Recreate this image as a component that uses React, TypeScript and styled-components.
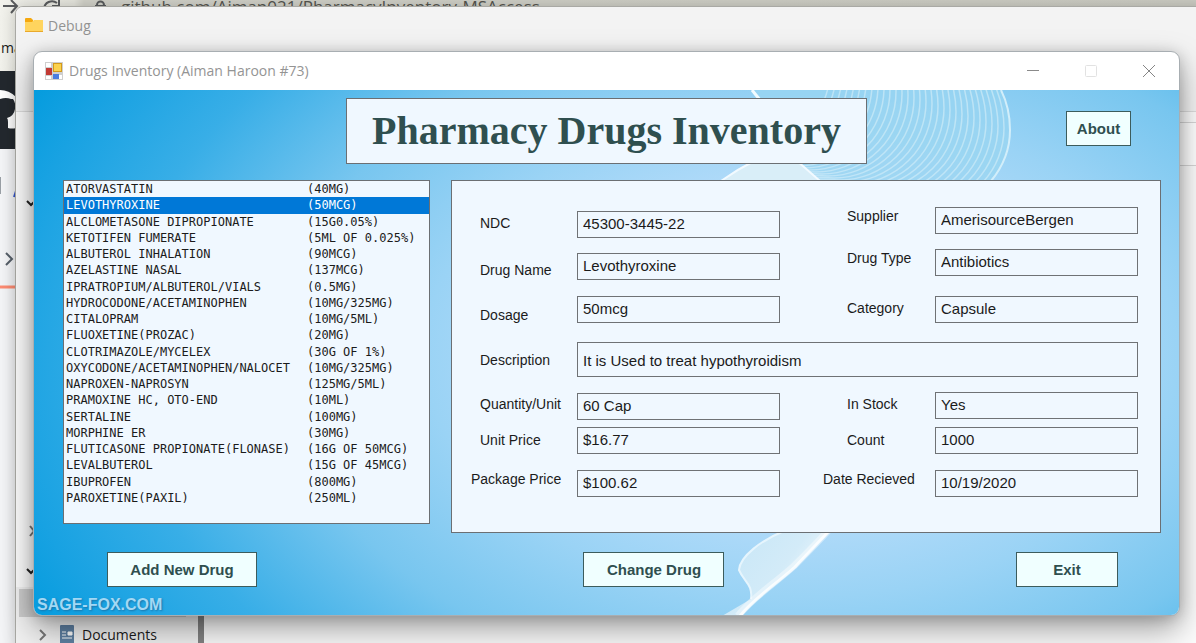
import React, { useState } from "react";
import styled, { createGlobalStyle } from "styled-components";

const sans = '"Liberation Sans", Arial, sans-serif';
const shell = '"Open Sans", "Segoe UI", sans-serif';
const edge = "#6b6f73";
const slate = "#2f4f4f";

const GlobalStyle = createGlobalStyle`
  *, *::before, *::after { box-sizing: border-box; }
  body { margin: 0; font-family: ${sans}; color: #1b1b1b; }
  button, input { font: inherit; color: inherit; }
`;

const Desktop = styled.div`
  position: relative;
  min-height: 100vh;
  overflow: hidden;
  background: #f4f5f7;
`;

/* Browser window at the back */
const BrowserBar = styled.div`
  height: 71px;
  background: linear-gradient(90deg, #f2f2ec 0, #e6e6de 74px, #d2d2c9 84px, #cdcdc4);
  display: flex;
  align-items: flex-start;
  gap: 12px;
`;

const BrowserIcons = styled.svg`
  flex: none;
  display: block;
`;

const Address = styled.span`
  font: 17px/14px ${shell};
  color: #55554f;
  white-space: nowrap;
`;

const BookmarkText = styled.span`
  position: absolute;
  left: 1px;
  top: 38px;
  font: 14px/20px ${shell};
  color: #1b1b1b;
`;

const RepoHeader = styled.div`
  height: 78px;
  background: #24292f;
`;

const RepoBody = styled.svg`
  display: block;
`;

/* Explorer window */
const Explorer = styled.section`
  position: absolute;
  inset: 6px -10px -10px 15px;
  border: 1px solid #a9a9a4;
  border-radius: 8px 0 0 0;
  background: #fcfcfc;
  overflow: hidden;
  box-shadow: 0 0 16px rgba(0, 0, 0, 0.2);
`;

const ExplorerBar = styled.header`
  height: 105px;
  padding: 8px 9px;
  background: #f3f3f3;
  border-bottom: 1px solid #dcdcdc;
  display: flex;
  align-items: flex-start;
  gap: 5px;
  font: 14px/21px ${shell};
  color: #929292;
`;

const AddressEdge = styled.div`
  height: 44px;
  margin: 10px 0 0 60px;
  border: 1px solid #d6d6d6;
  background: #ffffff;
`;

const NavPane = styled.nav`
  position: absolute;
  left: 0;
  top: 580px;
  width: 188px;
  padding: 2px 12px 0 3px;
  border-right: 6px solid #838383;
  background: #f1f1f1;
`;

const NavSelected = styled.div`
  height: 28px;
  background: #cccccc;
`;

const NavLink = styled.a`
  display: flex;
  align-items: center;
  gap: 8px;
  height: 36px;
  padding-left: 19px;
  font: 14px/20px ${shell};
  color: #1b1b1b;
  text-decoration: none;
`;

const NavText = styled.span`
  margin-left: -4px;
`;

const TreeMarks = styled.svg`
  position: absolute;
  left: 10px;
  top: 186px;
`;

/* Application window */
const AppWindow = styled.main`
  position: absolute;
  left: 33px;
  right: 16px;
  top: 51px;
  border: 1px solid #a8aeb2;
  border-radius: 9px;
  overflow: hidden;
  background: #ffffff;
  box-shadow: 0 14px 32px rgba(0, 0, 0, 0.36), 0 2px 14px rgba(0, 0, 0, 0.18);
`;

const TitleBar = styled.header`
  height: 38px;
  padding: 0 1px 0 11px;
  display: flex;
  align-items: center;
  gap: 6px;
  font: 14px/20px ${shell};
  color: #949494;
`;

const TitleText = styled.span`
  flex: 1;
`;

const Caption = styled.button`
  width: 58px;
  height: 38px;
  margin: 0;
  padding: 0;
  border: 0;
  background: none;
  display: grid;
  place-items: center;
`;

const CaptionGroup = styled.div`
  display: flex;
`;

const Form = styled.div`
  position: relative;
  padding: 8px 18px 28px 29px;
  background: radial-gradient(
    ellipse 70% 99% at 67% 50%,
    #bfe0fb 0%, #b5dcfa 30%, #9ad3f5 47%, #78c6ef 65%, #38aee7 85%, #18a2e2 100%, #059cde 108%
  );
`;

const Backdrop = styled.svg`
  position: absolute;
  inset: 0;
  width: 100%;
  height: 100%;
`;

const Watermark = styled.span`
  position: absolute;
  left: 3px;
  bottom: 1px;
  font: bold 16px/18px ${sans};
  color: #a3d8f4;
  text-shadow: 1px 1px 2px #1b75aa;
`;

const Header = styled.div`
  position: relative;
  display: grid;
  grid-template-columns: 1fr auto 1fr;
  align-items: start;
  padding-right: 19px;
`;

const Heading = styled.h1`
  grid-column: 2;
  margin: 0 0 0 8px;
  padding: 1px 25px;
  border: 1px solid ${edge};
  background: #f0f8ff;
  font: bold 40px/62px "Liberation Serif", "Times New Roman", serif;
  color: ${slate};
  white-space: nowrap;
`;

const FormButton = styled.button`
  height: 35px;
  padding: 0;
  border: 1px solid #3c5c5c;
  background: #f0ffff;
  font-weight: bold;
  font-size: 15px;
  color: ${slate};
`;

const AboutButton = styled(FormButton)`
  justify-self: end;
  width: 65px;
  margin: 13px 11px 0 0;
`;

const Content = styled.div`
  position: relative;
  display: flex;
  align-items: flex-start;
  gap: 21px;
  margin-top: 16px;
`;

const DrugList = styled.ul`
  flex: none;
  display: grid;
  grid-template-rows: repeat(20, 1fr);
  width: 367px;
  height: 344px;
  margin: 0;
  padding: 0 0 17px;
  border: 1px solid ${edge};
  background: #f0f8ff;
  list-style: none;
  font: 12px/16px "DejaVu Sans Mono", Consolas, monospace;
`;

const DrugRow = styled.li<{ $active: boolean }>`
  display: grid;
  grid-template-columns: 241px 1fr;
  padding-left: 2px;
  white-space: nowrap;
  cursor: default;
  background: ${(p) => (p.$active ? "#0078d7" : "transparent")};
  color: ${(p) => (p.$active ? "#ffffff" : "#1b1b1b")};
`;

const Panel = styled.section`
  flex: 1;
  min-width: 0;
  height: 353px;
  padding: 1px 22px 0 19px;
  border: 1px solid ${edge};
  background: #f0f8ff;
`;

const Fields = styled.div<{ $wide?: boolean }>`
  display: grid;
  grid-template-columns: ${(p) => (p.$wide ? "106px 1fr" : "106px 1fr 43px 112px 1fr")};
`;

const Stack = styled.div<{ $top: number; $rows: string; $column?: number }>`
  display: grid;
  align-content: start;
  padding-top: ${(p) => p.$top}px;
  grid-template-rows: ${(p) => p.$rows};
  grid-column: ${(p) => p.$column ?? "auto"};
`;

const Label = styled.label<{ $indent?: number }>`
  height: 18px;
  font-size: 14px;
  line-height: 18px;
  white-space: nowrap;
  padding-left: ${(p) => p.$indent ?? 0}px;
`;

const Field = styled.input<{ $tall?: boolean }>`
  width: 100%;
  height: ${(p) => (p.$tall ? 35 : 27)}px;
  padding: ${(p) => (p.$tall ? "2px 5px 0" : "0 5px 2px")};
  border: 1px solid #6f7275;
  border-radius: 0;
  background: #f0f8ff;
  font-size: 15px;
`;

const Actions = styled.div`
  position: relative;
  display: grid;
  grid-template-columns: 150px 28fr 141px 25fr 102px;
  margin-top: 19px;
  padding: 0 43px 0 44px;
  & > :nth-child(2) { grid-column: 3; }
  & > :nth-child(3) { grid-column: 5; }
`;

const drugs: [string, string][] = [
  ["ATORVASTATIN", "(40MG)"],
  ["LEVOTHYROXINE", "(50MCG)"],
  ["ALCLOMETASONE DIPROPIONATE", "(15G0.05%)"],
  ["KETOTIFEN FUMERATE", "(5ML OF 0.025%)"],
  ["ALBUTEROL INHALATION", "(90MCG)"],
  ["AZELASTINE NASAL", "(137MCG)"],
  ["IPRATROPIUM/ALBUTEROL/VIALS", "(0.5MG)"],
  ["HYDROCODONE/ACETAMINOPHEN", "(10MG/325MG)"],
  ["CITALOPRAM", "(10MG/5ML)"],
  ["FLUOXETINE(PROZAC)", "(20MG)"],
  ["CLOTRIMAZOLE/MYCELEX", "(30G OF 1%)"],
  ["OXYCODONE/ACETAMINOPHEN/NALOCET", "(10MG/325MG)"],
  ["NAPROXEN-NAPROSYN", "(125MG/5ML)"],
  ["PRAMOXINE HC, OTO-END", "(10ML)"],
  ["SERTALINE", "(100MG)"],
  ["MORPHINE ER", "(30MG)"],
  ["FLUTICASONE PROPIONATE(FLONASE)", "(16G OF 50MCG)"],
  ["LEVALBUTEROL", "(15G OF 45MCG)"],
  ["IBUPROFEN", "(800MG)"],
  ["PAROXETINE(PAXIL)", "(250ML)"],
];

/* Each ring of the fan sits a little further left and higher than the last */
const rings = Array.from({ length: 30 }, (_, i) => {
  const x = 970 - i * 6;
  const y = 38 - i * 2;
  return `M${x - 8} ${y - 40}Q${x} ${y - 20} ${x} ${y}A80 80 0 0 1 ${x - 80} ${y + 80}L${x - 130} ${y + 78}`;
});

function Swirl() {
  return (
    <Backdrop viewBox="0 0 1145 525" preserveAspectRatio="none" aria-hidden="true">
      <defs>
        <clipPath id="fan">
          <path d="M718 0H967Q976 18 976 40Q976 68 957 91H770L740 60Z" />
        </clipPath>
        <linearGradient id="petal" x1="0" y1="0" x2="1" y2="0.6">
          <stop offset="0" stopColor="#c6e6f7" />
          <stop offset="0.6" stopColor="#d3ebf8" />
          <stop offset="1" stopColor="#f6fcff" />
        </linearGradient>
      </defs>
      <g clipPath="url(#fan)">
        <rect x="680" width="300" height="95" fill="#9ad6f1" opacity="0.7" />
        <g fill="none" stroke="#cdebf8" strokeWidth="1.5" opacity="0.7">
          {rings.map((d) => (
            <path key={d} d={d} />
          ))}
        </g>
      </g>
      <path d="M967 0Q976 18 976 40Q976 68 957 91" fill="none" stroke="#d2eefa" strokeWidth="2" />
      <path d="M687 91Q704 79 722 70H762L786 91Z" fill="#d9eef8" />
      <path d="M687 91Q704 79 722 70M762 70L786 91" fill="none" stroke="#f2faff" strokeWidth="2" />
      <path d="M718 0L726 10" stroke="#f2fbff" strokeWidth="3" />
      <path d="M750 441C728 450 706 466 705 480C710 492 719 494 717 509L688 526H708C716 513 740 496 762 476C776 462 784 454 796 441Z" fill="url(#petal)" />
      <path d="M750 441C728 450 706 466 705 480C710 492 719 494 717 509" fill="none" stroke="#e6f5fd" strokeWidth="2" />
      <path d="M794 441C782 454 774 462 760 476C740 494 718 508 704 526" fill="none" stroke="#fff" strokeWidth="7" opacity="0.4" />
      <path d="M795 441C783 454 775 462 761 477C741 495 719 509 706 526" fill="none" stroke="#fff" strokeWidth="3" opacity="0.8" />
    </Backdrop>
  );
}

export default function App() {
  const [active, setActive] = useState(1);

  return (
    <Desktop>
      <GlobalStyle />
      <BrowserBar>
        <BrowserIcons width="109" height="18" viewBox="0 0 109 18" fill="none" stroke="#5a5c5e" strokeWidth="2">
          <path d="M3 6H17M11 0L17 6L11 13" />
          <path d="M44 9A8 8 0 0 1 57 3M59 0V6H52" />
          <rect x="95" y="5" width="11" height="9" fill="#5a5c5e" stroke="none" />
          <path d="M97 6V5A3 3 0 0 1 104 5V6" />
        </BrowserIcons>
        <Address>github.com/Aiman021/PharmacyInventory-MSAccess</Address>
      </BrowserBar>
      <BookmarkText>ma</BookmarkText>
      <RepoHeader>
        <svg width="16" height="78" viewBox="0 0 16 78" aria-hidden="true">
          <path d="M0 19Q9 19 16 26V57Q12 58 8 57V51Q8 48 7 47Q14 45 15 38Q16 32 13 28L11 28Q6 26 0 28Z" fill="#fff" />
        </svg>
      </RepoHeader>
      <RepoBody width="16" height="150" viewBox="0 0 16 150" fill="none" aria-hidden="true">
        <path d="M0 28V45" stroke="#9aa0a6" strokeWidth="2" />
        <path d="M14 48L16 42" stroke="#3355cc" strokeWidth="2" />
        <path d="M6 104L12 110L6 116" stroke="#57606a" strokeWidth="2" />
        <path d="M0 138H16" stroke="#fd8c73" strokeWidth="3" />
      </RepoBody>

      <Explorer>
        <ExplorerBar>
          <svg width="18" height="20" viewBox="0 0 18 20" aria-hidden="true">
            <path d="M0 4Q0 3 1 3H6L8 5V9H0Z" fill="#f5a80f" />
            <path d="M0 7H7L9 5H18V17H0Z" fill="#ffd45e" />
            <path d="M0 16H18V17H0Z" fill="#e9a92c" />
          </svg>
          <span>Debug</span>
        </ExplorerBar>
        <AddressEdge />
        <TreeMarks width="14" height="390" viewBox="0 0 14 390" fill="none" stroke="#222" strokeWidth="2" aria-hidden="true">
          <path d="M1 8L5 12L9 8" />
          <path d="M4 333L8 338L4 343" stroke="#777" />
          <path d="M1 376L5 380L9 376" />
        </TreeMarks>
        <NavPane>
          <NavSelected />
          <NavLink href="#documents">
            <svg width="10" height="12" viewBox="0 0 10 12" fill="none" stroke="#777" strokeWidth="2" aria-hidden="true">
              <path d="M2 1L7 6L2 11" />
            </svg>
            <svg width="22" height="20" viewBox="0 0 22 20" aria-hidden="true">
              <rect x="4" width="14" height="20" rx="1" fill="#5f81a3" />
              <path d="M6 7H10M6 10H10M6 13H16M12 7H16V10H12Z" stroke="#fff" fill="#fff" />
            </svg>
            <NavText>Documents</NavText>
          </NavLink>
        </NavPane>
      </Explorer>

      <AppWindow>
        <TitleBar>
          <svg width="18" height="18" viewBox="0 0 18 18" aria-hidden="true">
            <rect width="18" height="18" fill="#cfcfcf" />
            <path d="M1 1H6V5H1ZM1 14H6V17H1ZM14 13H17V17H14Z" fill="#fff" />
            <rect x="1" y="6" width="6" height="7" fill="#c23a34" />
            <rect x="8" y="1" width="9" height="9" fill="#d39a1c" />
            <rect x="9" y="2" width="7" height="7" fill="#fbd24e" />
            <rect x="8" y="12" width="6" height="5" fill="#4a7de0" />
          </svg>
          <TitleText>Drugs Inventory (Aiman Haroon #73)</TitleText>
          <CaptionGroup>
            <Caption aria-label="Minimize">
              <svg width="12" height="12" viewBox="0 0 12 12"><path d="M0 5.5H12" stroke="#8a8a8a" /></svg>
            </Caption>
            <Caption aria-label="Maximize" disabled>
              <svg width="12" height="12" viewBox="0 0 12 12"><rect x="0.5" y="0.5" width="11" height="11" rx="1" fill="none" stroke="#e2e2e2" /></svg>
            </Caption>
            <Caption aria-label="Close">
              <svg width="12" height="12" viewBox="0 0 12 12"><path d="M0 0L12 12M12 0L0 12" stroke="#858585" /></svg>
            </Caption>
          </CaptionGroup>
        </TitleBar>

        <Form>
          <Swirl />
          <Watermark>SAGE-FOX.COM</Watermark>
          <Header>
            <Heading>Pharmacy Drugs Inventory</Heading>
            <AboutButton>About</AboutButton>
          </Header>

          <Content>
            <DrugList role="listbox" aria-label="Drugs">
              {drugs.map(([name, dose], i) => (
                <DrugRow key={name} role="option" aria-selected={i === active} $active={i === active} onClick={() => setActive(i)}>
                  <span>{name}</span>
                  <span>{dose}</span>
                </DrugRow>
              ))}
            </DrugList>

            <Panel>
              <Fields>
                <Stack $top={32} $rows="47px 45px 18px">
                  <Label htmlFor="ndc" $indent={9}>NDC</Label>
                  <Label htmlFor="name" $indent={9}>Drug Name</Label>
                  <Label htmlFor="dosage" $indent={9}>Dosage</Label>
                </Stack>
                <Stack $top={29} $rows="42px 43px 28px">
                  <Field id="ndc" defaultValue="45300-3445-22" />
                  <Field id="name" defaultValue="Levothyroxine" />
                  <Field id="dosage" defaultValue="50mcg" />
                </Stack>
                <Stack $top={25} $rows="42px 50px 18px" $column={4}>
                  <Label htmlFor="supplier" $indent={24}>Supplier</Label>
                  <Label htmlFor="type" $indent={24}>Drug Type</Label>
                  <Label htmlFor="category" $indent={24}>Category</Label>
                </Stack>
                <Stack $top={25} $rows="42px 47px 28px">
                  <Field id="supplier" defaultValue="AmerisourceBergen" />
                  <Field id="type" defaultValue="Antibiotics" />
                  <Field id="category" defaultValue="Capsule" />
                </Stack>
              </Fields>
              <Fields $wide>
                <Stack $top={27} $rows="18px">
                  <Label htmlFor="description" $indent={9}>Description</Label>
                </Stack>
                <Stack $top={18} $rows="35px">
                  <Field id="description" $tall defaultValue="It is Used to treat hypothyroidism" />
                </Stack>
              </Fields>
              <Fields>
                <Stack $top={18} $rows="36px 39px 18px">
                  <Label htmlFor="quantity" $indent={9}>Quantity/Unit</Label>
                  <Label htmlFor="price" $indent={9}>Unit Price</Label>
                  <Label htmlFor="package">Package Price</Label>
                </Stack>
                <Stack $top={16} $rows="34px 43px 27px">
                  <Field id="quantity" defaultValue="60 Cap" />
                  <Field id="price" defaultValue="$16.77" />
                  <Field id="package" defaultValue="$100.62" />
                </Stack>
                <Stack $top={18} $rows="36px 39px 18px" $column={4}>
                  <Label htmlFor="stock" $indent={24}>In Stock</Label>
                  <Label htmlFor="count" $indent={24}>Count</Label>
                  <Label htmlFor="received">Date Recieved</Label>
                </Stack>
                <Stack $top={15} $rows="35px 43px 27px">
                  <Field id="stock" defaultValue="Yes" />
                  <Field id="count" defaultValue="1000" />
                  <Field id="received" defaultValue="10/19/2020" />
                </Stack>
              </Fields>
            </Panel>
          </Content>

          <Actions>
            <FormButton>Add New Drug</FormButton>
            <FormButton>Change Drug</FormButton>
            <FormButton>Exit</FormButton>
          </Actions>
        </Form>
      </AppWindow>
    </Desktop>
  );
}
